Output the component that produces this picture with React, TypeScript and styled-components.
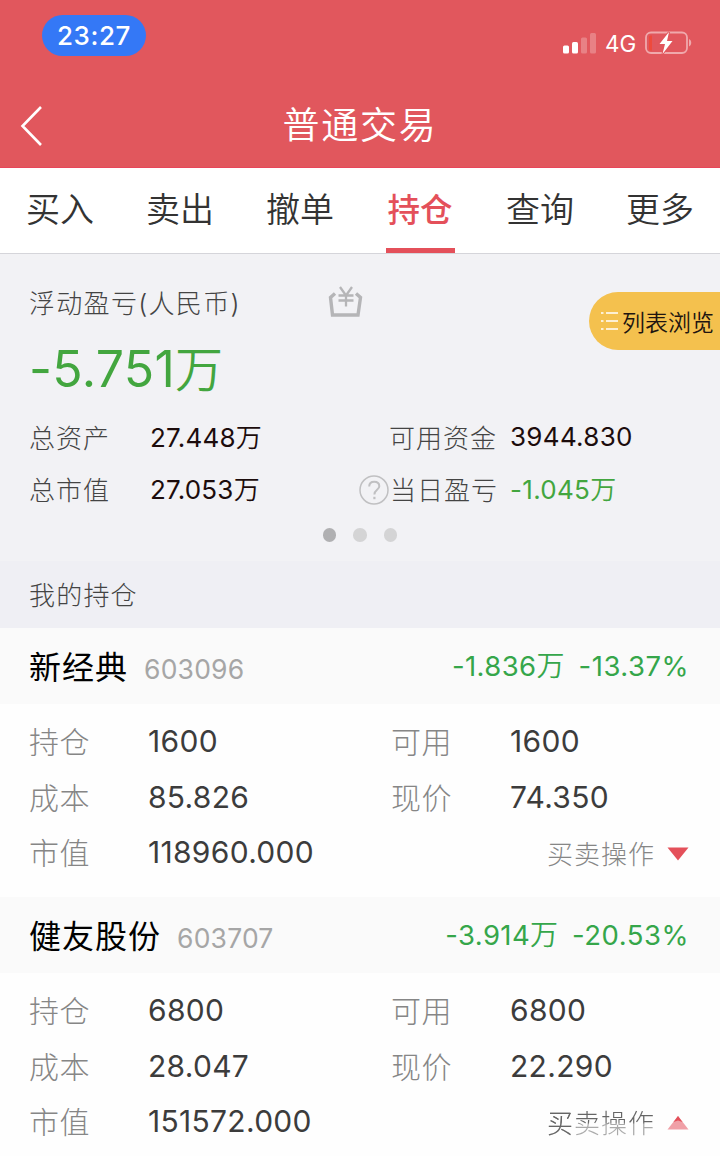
import React from 'react';
import styled, { createGlobalStyle } from 'styled-components';

const Global = createGlobalStyle`
  * { box-sizing: border-box; }
  body {
    margin: 0;
    background: #fff;
    font-family: Inter, "Noto Sans CJK SC", sans-serif;
    font-weight: 400;
  }
`;

const Screen = styled.div`
  width: 720px;
  height: 1156px;
  overflow: hidden;
  background: #fefefe;
  white-space: nowrap;
`;

const Header = styled.header`
  height: 168px;
  background: #e1575d;
  color: #fff;
  border-bottom: 1px solid #e8465a;
`;

const StatusBar = styled.div`
  height: 84px;
  padding: 15px 28px 0 42px;
  display: flex;
  justify-content: space-between;
  align-items: flex-start;
`;

const Clock = styled.div`
  width: 104px;
  height: 41px;
  border-radius: 21px;
  background: #3478f6;
  font-size: 26px;
  font-weight: 500;
  line-height: 42px;
  text-align: center;
  letter-spacing: 0.6px;
`;

const Signals = styled.div`
  display: flex;
  align-items: center;
  height: 26px;
  margin-top: 15px;
`;

const Network = styled.span`
  font-size: 22.5px;
  width: 40px;
  margin-left: 9px;
  line-height: 26px;
  padding-top: 1px;
`;

const NavBar = styled.div`
  height: 83px;
  display: grid;
  grid-template-columns: 60px 1fr 60px;
  align-items: center;
`;

const Back = styled.svg`
  margin-left: 20px;
  display: block;
`;

const Title = styled.h1`
  margin: 0;
  text-align: center;
  font-size: 37px;
  font-weight: 350;
  letter-spacing: 1.8px;
  line-height: 54px;
`;

const Tabs = styled.nav`
  display: flex;
  height: 86px;
  background: #fff;
  border-bottom: 1px solid #d5d5da;
`;

const Tab = styled.div<{ $active?: boolean }>`
  flex: 1;
  display: flex;
  flex-direction: column;
  align-items: center;
  justify-content: space-between;
  font-size: ${(p) => (p.$active ? 32.5 : 34)}px;
  font-weight: ${(p) => (p.$active ? 500 : 350)};
  color: ${(p) => (p.$active ? '#e4505a' : '#333')};
  line-height: ${(p) => (p.$active ? 86 : 84)}px;
  height: 85px;
  &::after {
    content: '';
    width: 69px;
    height: 5px;
    flex: none;
    margin-top: -6px;
    background: ${(p) => (p.$active ? '#e4505a' : 'transparent')};
  }
`;

const Summary = styled.section`
  position: relative;
  height: 307px;
  padding-left: 29px;
  background: #f2f2f5;
`;

const SummaryTop = styled.div`
  display: flex;
  align-items: center;
  padding-top: 30px;
  height: 68px;
`;

const Text = styled.span<{ $size: number; $ls?: number; $color?: string; $weight?: number }>`
  font-size: ${(p) => p.$size}px;
  letter-spacing: ${(p) => p.$ls ?? 0}px;
  color: ${(p) => p.$color ?? '#444'};
  font-weight: ${(p) => p.$weight ?? 300};
`;

const Caption = styled(Text)`
  width: 298px;
  padding-bottom: 4px;
`;

const Profit = styled.div`
  height: 91px;
  padding-bottom: 2px;
  display: flex;
  align-items: center;
`;

const SummaryRow = styled.div`
  display: grid;
  grid-template-columns: 121px 207px 153px 1fr;
  align-items: center;
  height: 52px;
  padding-bottom: 6px;
`;

const Right = styled.span`
  display: flex;
  align-items: center;
  padding-left: 2px;
`;

const HelpIcon = styled.svg`
  flex: none;
  margin: 3px 1px 0 0;
`;

const HelpGap = styled.i`
  flex: none;
  width: 30px;
`;

const Value = styled.span<{ $unit?: boolean }>`
  display: flex;
  align-items: baseline;
  padding-bottom: ${(p) => (p.$unit ? 2 : 0)}px;
`;

const Dots = styled.div`
  display: flex;
  justify-content: center;
  gap: 17px;
  margin: 11px 29px 0 0;
`;

const Dot = styled.i<{ $on?: boolean }>`
  width: 13.6px;
  height: 13.6px;
  border-radius: 50%;
  background: ${(p) => (p.$on ? '#b0b0b2' : '#d4d4d5')};
`;

const ListButton = styled.div`
  position: absolute;
  right: 0;
  top: 38px;
  width: 131px;
  height: 58px;
  border-radius: 29px 0 0 29px;
  background: #f4c14e;
  display: flex;
  align-items: center;
  gap: 3px;
  padding-left: 11px;
`;

const SectionTitle = styled.div`
  height: 67px;
  background: #efeff4;
  padding: 0 0 2px 29px;
  display: flex;
  align-items: center;
`;

const StockHead = styled.div`
  height: 76px;
  background: #fafafa;
  padding: 0 31px 3px 29px;
  display: flex;
  justify-content: space-between;
  align-items: center;
`;

const StockName = styled.div`
  display: flex;
  align-items: baseline;
  gap: 16px;
`;

const Change = styled.div`
  display: flex;
  align-items: baseline;
`;

const Percent = styled(Text)`
  margin-left: 14px;
`;

const StockBody = styled.div`
  height: 193px;
  padding: 9px 0 0 29px;
`;

const DataRow = styled.div`
  display: grid;
  grid-template-columns: 119px 243px 119px 1fr;
  align-items: center;
  height: 55.7px;
`;

const LabelText = styled(Text)`
  padding-bottom: 2px;
`;

const Action = styled.div`
  grid-column: 3 / 5;
  display: flex;
  align-items: center;
  justify-content: flex-end;
  gap: 12px;
  padding-right: 31px;
`;

const Arrow = styled.svg`
  margin-top: 4px;
`;

const ActionText = styled(Text)<{ $faded?: boolean }>`
  ${(p) => p.$faded && `
    color: transparent;
    background: linear-gradient(100deg, #666 0 24%, transparent 30%), linear-gradient(#666 0 52%, #aaa 58%);
    background-clip: text;
    -webkit-background-clip: text;
  `}
`;

const GREEN = '#35a64a';

const List = () => (
  <svg width="19" height="20" viewBox="0 0 19 20" stroke="#fff" strokeWidth="1.6">
    <path d="M1 2h2.5M6 2h12M1 10h2.5M6 10h12M1 18h2.5M6 18h12" />
  </svg>
);

const Basket = () => (
  <svg width="36" height="34" viewBox="0 0 36 34" fill="none" stroke="#b5b5b7">
    <path d="M8 7.500L3.500 11.500L5.500 29H31L33.500 11.500L29 7.500" strokeWidth="3.4" />
    <path d="M13 1L19 9.500L25 1M19 9V20.500M11.500 9.500H26.500M11.500 14.500H26.500" strokeWidth="2.3" />
  </svg>
);

const Help = () => (
  <HelpIcon width="30" height="30" viewBox="0 0 30 30" fill="none" stroke="#c0c0c2" strokeWidth="1.5">
    <circle cx="15" cy="15" r="14" />
    <path d="M10.2 11.5C10.2 8.5 12.2 6.7 15.2 6.7S20.3 8.5 20.3 11.2C20.3 15 15.4 14.7 15.4 19.5" strokeWidth="2" />
    <path d="M15.4 21.8V24.2" strokeWidth="2.2" />
  </HelpIcon>
);

const Signal = () => (
  <svg width="33" height="22" viewBox="0 0 33 22" fill="#fff">
    <rect x="0" y="13.500" width="6" height="8" rx="1.5" />
    <rect x="9" y="10" width="6" height="11.500" rx="1.5" />
    <rect x="18" y="5.500" width="6" height="16" rx="1.5" opacity=".25" />
    <rect x="27" y="1" width="6" height="20.500" rx="1.5" opacity=".25" />
  </svg>
);

const Battery = () => (
  <svg width="47" height="24" viewBox="0 0 47 24" fill="none">
    <rect x="1" y="1.500" width="41" height="20.5" rx="5" stroke="#f0a9ac" strokeWidth="1.8" />
    <path d="M44 8C47 9.500 47 14 44 15.500Z" fill="#f0a9ac" />
    <path d="M7 4.500V19.500H5.500Q4 19.500 4 18V6Q4 4.500 5.500 4.500Z" fill="#ee4a3c" />
    <path d="M24 1L14.500 13H20L17.500 23L27.500 10H22Z" fill="#fff" stroke="#e1575d" strokeWidth="2" paintOrder="stroke" />
  </svg>
);

const Amount = ({ value, size, unit, ls, color }: {
  value: string; size: number; unit?: number; ls?: number; color: string;
}) => (
  <Value $unit={!!unit}>
    <Text $size={size} $ls={ls} $color={color} $weight={385}>{value}</Text>
    {unit && <Text $size={unit} $color={color} $weight={350}>万</Text>}
  </Value>
);

type Stock = {
  name: string; code: string; amount: string; percent: string;
  hold: string; free: string; cost: string; price: string; total: string; open?: boolean;
};

const stocks: Stock[] = [
  { name: '新经典', code: '603096', amount: '-1.836', percent: '-13.37%', hold: '1600', free: '1600', cost: '85.826', price: '74.350', total: '118960.000' },
  { name: '健友股份', code: '603707', amount: '-3.914', percent: '-20.53%', hold: '6800', free: '6800', cost: '28.047', price: '22.290', total: '151572.000', open: true },
];

const Label = ({ children }: { children: string }) => (
  <LabelText $size={30} $ls={0.6} $color="#868686">{children}</LabelText>
);
const Figure = ({ children }: { children: string }) => (
  <Text $size={30} $ls={0.3} $color="#3c3c3c" $weight={385}>{children}</Text>
);

const StockCard = ({ s }: { s: Stock }) => (
  <section>
    <StockHead>
      <StockName>
        <Text $size={32} $ls={1} $color="#000" $weight={400}>{s.name}</Text>
        <Text $size={26.5} $ls={0.2} $color="#a6a6a6" $weight={385}>{s.code}</Text>
      </StockName>
      <Change>
        <Amount value={s.amount} size={27.5} ls={0.4} unit={28} color={GREEN} />
        <Percent $size={27.5} $ls={0.5} $color={GREEN} $weight={385}>{s.percent}</Percent>
      </Change>
    </StockHead>
    <StockBody>
      <DataRow><Label>持仓</Label><Figure>{s.hold}</Figure><Label>可用</Label><Figure>{s.free}</Figure></DataRow>
      <DataRow><Label>成本</Label><Figure>{s.cost}</Figure><Label>现价</Label><Figure>{s.price}</Figure></DataRow>
      <DataRow>
        <Label>市值</Label><Figure>{s.total}</Figure>
        <Action>
          <ActionText $size={26} $ls={1} $color="#868686" $faded={s.open}>买卖操作</ActionText>
          <Arrow width="22" height="14" viewBox="0 0 22 14">
            {s.open
              ? <><path d="M11 0L21.500 13.500H.5Z" fill="#f0a0a7" /><path d="M11 0L15.500 6L11 4.500L6.500 6Z" fill="#e4505a" /></>
              : <path d="M.5 .5H21.500L11 13.500Z" fill="#e4505a" />}
          </Arrow>
        </Action>
      </DataRow>
    </StockBody>
  </section>
);

export default function App() {
  return (
    <Screen>
      <Global />
      <Header>
        <StatusBar>
          <Clock>23:27</Clock>
          <Signals><Signal /><Network>4G</Network><Battery /></Signals>
        </StatusBar>
        <NavBar>
          <Back width="23" height="42" viewBox="0 0 23 42" fill="none" stroke="#fff" strokeWidth="2.6">
            <path d="M21 2L2.500 21L21 40" />
          </Back>
          <Title>普通交易</Title>
        </NavBar>
      </Header>
      <Tabs>
        {['买入', '卖出', '撤单', '持仓', '查询', '更多'].map((t) => (
          <Tab key={t} $active={t === '持仓'}>{t}</Tab>
        ))}
      </Tabs>
      <Summary>
        <SummaryTop>
          <Caption $size={26} $ls={1.3}>浮动盈亏(人民币)</Caption>
          <Basket />
        </SummaryTop>
        <Profit><Amount value="-5.751" size={50} ls={0.3} unit={48} color="#43a63f" /></Profit>
        <SummaryRow>
          <Text $size={26} $ls={1}>总资产</Text>
          <Amount value="27.448" size={26} ls={0.2} unit={26} color="#1c0c0c" />
          <Right><HelpGap /><Text $size={26} $ls={1}>可用资金</Text></Right>
          <Amount value="3944.830" size={26} ls={0.3} color="#1c0c0c" />
        </SummaryRow>
        <SummaryRow>
          <Text $size={26} $ls={1}>总市值</Text>
          <Amount value="27.053" size={26} ls={0.2} unit={26} color="#1c0c0c" />
          <Right><Help /><Text $size={26} $ls={1}>当日盈亏</Text></Right>
          <Amount value="-1.045" size={26} ls={0.3} unit={26} color="#43a63f" />
        </SummaryRow>
        <Dots><Dot $on /><Dot /><Dot /></Dots>
        <ListButton><List /><Text $size={23} $color="#201410" $weight={350}>列表浏览</Text></ListButton>
      </Summary>
      <SectionTitle><Text $size={26} $ls={1.2}>我的持仓</Text></SectionTitle>
      {stocks.map((s) => <StockCard key={s.code} s={s} />)}
    </Screen>
  );
}
